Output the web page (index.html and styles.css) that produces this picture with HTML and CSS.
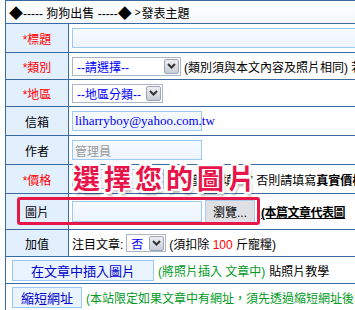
FILE: index.html
```html
<!DOCTYPE html>
<html lang="zh-Hant">
<head>
    <meta charset="UTF-8">
    <title>發表主題</title>
    <link rel="stylesheet" href="styles.css">
</head>
<body>
    <div class="form">
        <div class="row head"><span class="dia">◆</span>----- 狗狗出售 -----<span class="dia">◆</span> <span class="crumb">&gt;</span>發表主題</div>

        <div class="row r29">
            <div class="label req">*標題</div>
            <div class="field"><span class="txt w-title"></span></div>
        </div>

        <div class="row r27">
            <div class="label req">*類別</div>
            <div class="field">
                <span class="select w-cat"><span class="sel-text">--請選擇--</span><span class="sel-btn"><svg width="9" height="6" viewBox="0 0 9 6"><path d="M1 1 L4.5 4.5 L8 1" fill="none" stroke="#333" stroke-width="2"/></svg></span></span>
                <span class="note">(類別須與本文內容及照片相同) 若</span>
            </div>
        </div>

        <div class="row r27">
            <div class="label req">*地區</div>
            <div class="field">
                <span class="select w-area"><span class="sel-text">--地區分類--</span><span class="sel-btn"><svg width="9" height="6" viewBox="0 0 9 6"><path d="M1 1 L4.5 4.5 L8 1" fill="none" stroke="#333" stroke-width="2"/></svg></span></span>
            </div>
        </div>

        <div class="row r29">
            <div class="label">信箱</div>
            <div class="field"><span class="txt w-mail mail">liharryboy@yahoo.com.tw</span></div>
        </div>

        <div class="row r29">
            <div class="label">作者</div>
            <div class="field"><span class="txt w-mail author">管理員</span></div>
        </div>

        <div class="row r29">
            <div class="label req">*價格</div>
            <div class="field">
                <span class="txt w-price"></span>
                <span class="note">元 (贈送請填 "0" 否則請填寫<b>真實價格</b></span>
            </div>
        </div>

        <div class="row r36">
            <div class="label">圖片</div>
            <div class="field">
                <span class="txt w-file"></span>
                <span class="browse">瀏覽...</span>
                <span class="cover">(本篇文章代表圖</span>
            </div>
        </div>

        <div class="row r27">
            <div class="label">加值</div>
            <div class="field">
                <span class="note">注目文章:</span>
                <span class="select w-hot"><span class="sel-text">否</span><span class="sel-btn"><svg width="9" height="6" viewBox="0 0 9 6"><path d="M1 1 L4.5 4.5 L8 1" fill="none" stroke="#333" stroke-width="2"/></svg></span></span>
                <span class="note">(須扣除 <span class="num">100</span> 斤寵糧)</span>
            </div>
        </div>

        <div class="row r27 wide">
            <span class="btn w-insert">在文章中插入圖片</span>
            <span class="green">(將照片插入 文章中)</span>
            <span class="note">貼照片教學</span>
        </div>

        <div class="row r27 wide">
            <span class="btn w-short">縮短網址</span>
            <span class="green">(本站限定如果文章中有網址，須先透過縮短網址後才可發表</span>
        </div>

        <!-- overlays from the tutorial screenshot -->
        <div class="callout">選擇您的圖片</div>
        <div class="marker"></div>
    </div>
</body>
</html>
```

FILE: styles.css
```css
html, body {
    margin: 0;
    padding: 0;
    overflow: hidden;
    background: #ffffff;
}
body {
    font-family: "Liberation Sans", "Noto Sans CJK TC", sans-serif;
    font-size: 12px;
    color: #000000;
}
.form {
    position: relative;
    margin-left: 5px;
    width: 460px;
    border-top: 1px solid #3a6aa3;
    border-left: 1px solid #3a6aa3;
}
.row {
    display: flex;
    box-sizing: border-box;
    border-bottom: 1px solid #3a6aa3;
    white-space: nowrap;
}
.head {
    height: 23px;
    align-items: center;
    padding-left: 3px;
    font-size: 12px;
    background: linear-gradient(#ffffff, #f4f8fc);
}
.dia {
    font-size: 14px;
}
.crumb {
    font-size: 10px;
    margin: 0 1px 0 3px;
}
.r27 { height: 27px; }
.r29 { height: 29px; }
.r36 { height: 36px; }
.label {
    width: 63px;
    flex: none;
    box-sizing: border-box;
    border-right: 1px solid #3a6aa3;
    background: #e2effc;
    display: flex;
    align-items: center;
    justify-content: center;
    font-size: 12px;
}
.req {
    color: #ff0000;
}
.field {
    display: flex;
    align-items: center;
    padding-left: 3px;
    gap: 3px;
}
.txt {
    display: inline-flex;
    align-items: center;
    box-sizing: border-box;
    height: 20px;
    border: 1px solid #9ccaf2;
    background: linear-gradient(#f7fbff, #ecf4fd);
    padding-left: 2px;
}
.w-title { width: 330px; }
.w-mail { width: 130px; }
.w-price { width: 92px; }
.w-file { width: 130px; height: 21px; }
.mail {
    font-family: "Liberation Serif", serif;
    font-size: 13px;
    color: #0000ee;
}
.author {
    color: #999999;
    font-size: 12px;
}
.select {
    display: inline-flex;
    align-items: center;
    justify-content: space-between;
    box-sizing: border-box;
    height: 19px;
    border: 1px solid #a8b6c8;
    background: #ffffff;
}
.w-cat { width: 109px; }
.w-area { width: 91px; }
.w-hot { width: 40px; height: 18px; }
.sel-text {
    color: #0000ff;
    padding-left: 4px;
}
.sel-btn {
    width: 15px;
    height: 15px;
    margin-right: 1px;
    box-sizing: border-box;
    display: flex;
    align-items: center;
    justify-content: center;
    background: linear-gradient(#eceef3, #c8ccd6);
    border: 1px solid #9ea6b6;
    border-radius: 2px;
}
.note {
    font-size: 12px;
}
.num {
    color: #ff0000;
}
.browse {
    display: inline-flex;
    align-items: center;
    justify-content: center;
    box-sizing: border-box;
    width: 50px;
    height: 23px;
    border: 1px solid #a9cdee;
    background: #dfe0e6;
    font-size: 12px;
}
.cover {
    margin-left: 3px;
    font-weight: bold;
    text-decoration: underline;
    font-size: 12px;
    letter-spacing: -0.5px;
}
.wide {
    align-items: center;
    padding-left: 6px;
    gap: 4px;
}
.btn {
    display: inline-flex;
    align-items: center;
    justify-content: center;
    box-sizing: border-box;
    height: 21px;
    border: 1px solid #99c9f2;
    background: #eaf4fe;
    color: #0000cc;
    font-size: 13px;
}
.w-insert { width: 142px; }
.w-short { width: 70px; }
.green {
    color: #009a1e;
    font-size: 12px;
}
.callout {
    position: absolute;
    left: 67px;
    top: 163px;
    font-size: 27px;
    line-height: 32px;
    font-weight: bold;
    letter-spacing: 4px;
    color: #e8154b;
    text-shadow:
        2px 0 0 #fff, -2px 0 0 #fff, 0 2px 0 #fff, 0 -2px 0 #fff,
        2px 2px 0 #fff, -2px -2px 0 #fff, 2px -2px 0 #fff, -2px 2px 0 #fff,
        2px 4px 3px rgba(0, 0, 0, 0.35);
}
.marker {
    position: absolute;
    left: 11px;
    top: 196px;
    width: 243px;
    height: 28px;
    box-sizing: border-box;
    border: 3px solid #e8174a;
    border-radius: 3px;
}
```
